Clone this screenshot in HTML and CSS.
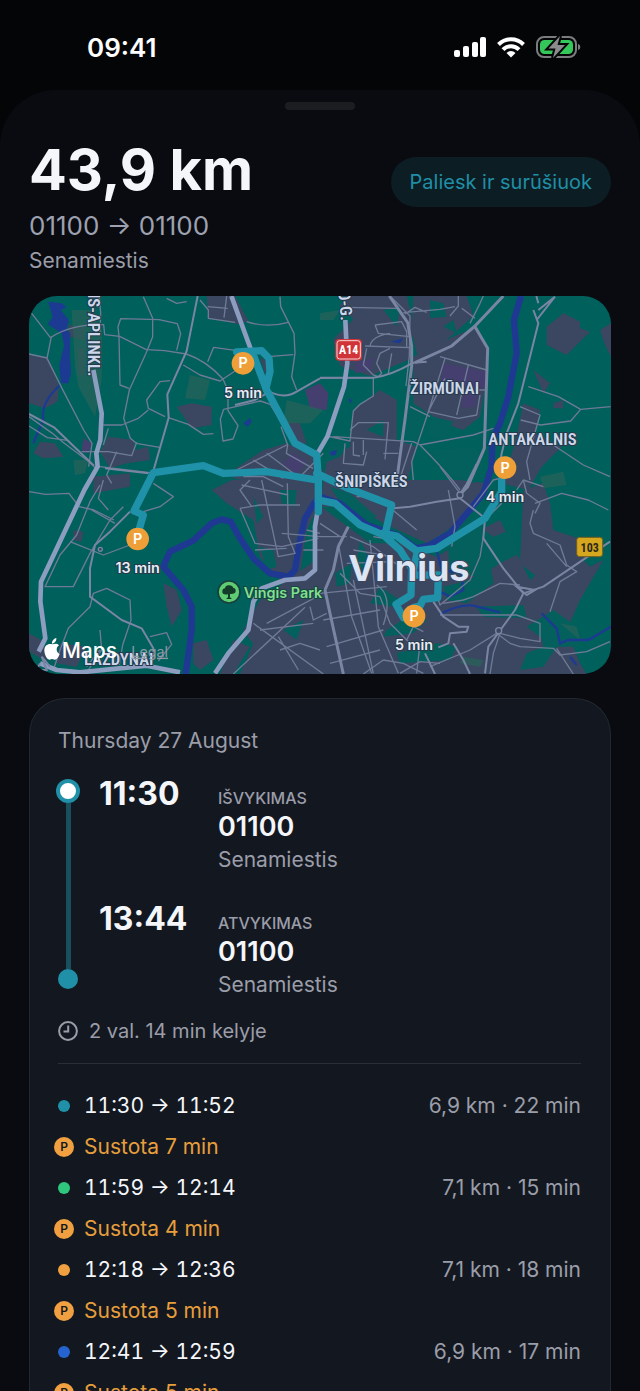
FILE: index.html
```html
<!DOCTYPE html>
<html lang="lt">
<head>
    <meta charset="UTF-8">
    <meta name="viewport" content="width=device-width, initial-scale=1.0">
    <title>Kelionė</title>
    <link rel="stylesheet" href="styles.css">
</head>
<body>
    <div class="status-bar">
        <span class="clock">09:41</span>
        <svg class="status-icons" viewBox="0 0 128 24" aria-hidden="true">
            <!-- signal -->
            <g fill="#fff">
                <rect x="0" y="15" width="6" height="7" rx="2"/>
                <rect x="9" y="11" width="6" height="11" rx="2"/>
                <rect x="18" y="7" width="6" height="15" rx="2"/>
                <rect x="26" y="2" width="6" height="20" rx="2"/>
            </g>
            <!-- wifi -->
            <g fill="none" stroke="#fff" stroke-width="4">
                <path d="M44.500 9.500a17.500 17.500 0 0 1 25 0"/>
                <path d="M49 14.700a11 11 0 0 1 16 0"/>
            </g>
            <path d="M57 22.500l-4.500-4.600a6.500 6.500 0 0 1 9 0z" fill="#fff"/>
            <!-- battery -->
            <rect x="83" y="2" width="39" height="20" rx="7" fill="none" stroke="#7b7c7e" stroke-width="2"/>
            <path d="M124 9c3 .6 3 5.400 0 6z" fill="#7b7c7e"/>
            <rect x="86" y="5" width="33" height="14" rx="4.500" fill="#34c759"/>
            <path d="M106 1L94.500 13.500h7L99 23l12-13h-7.500z" fill="#8a8b8d" stroke="#050608" stroke-width="4" paint-order="stroke"/>
        </svg>
    </div>

    <main class="sheet">
        <div class="grabber"></div>

        <header class="trip-header">
            <div>
                <h1>43,9 km</h1>
                <p class="route">01100 → 01100</p>
                <p class="district">Senamiestis</p>
            </div>
            <button class="sort-button" type="button">Paliesk ir surūšiuok</button>
        </header>

        <div class="map">
            <svg viewBox="27 18 1746 1134" role="img" aria-label="Kelionės žemėlapis">
                <!-- built-up areas -->
                <g class="built">
                    <path d="M27 195L85 205 118 290 112 335 75 355 27 340z"/>
                    <path d="M175 175h18v80h-18zM60 455l45 5 25 40-60 5-30-15zM145 105l50 5-5 40-40-10z"/>
                    <path d="M265 440l75 10 5 30 40-10 5 40-70 10-50 15-30-50zM220 560l110-10v40l-110 20z"/>
                    <path d="M470 350l45-10 60 10v55l-60 10z"/>
                    <path d="M560 18h85l40 75-30 10-90-20zM720 205l35 10-10 60z"/>
                    <path d="M640 540l90-60 70-20 80 40 40 60-50 20-110 5-120-20zM780 390l60 10 20 60-40 10z"/>
                    <path d="M980 18h180l20 80-10 110-120 50-90-30-20-80 60-60-40-40z"/>
                    <path d="M1180 18h160l20 60-100 90-60 60-25-100z"/>
                    <path d="M1370 110l30 60v90l-20 120-50 40-60-20-90-60 0-140 120-60z"/>
                    <path d="M1000 360l80-60 50 30v120l60 20-50 180h-240l20-140 70-40z"/>
                    <path d="M1580 110l50-40 50 25v20l30 10-50 50-20 20-60-30zM1740 120l33-20v100l-20-40zM1540 240l50 40-20 30zM1600 340l30-10v25h-30z"/>
                    <path d="M1510 340l50 20-15 70 80 40-60 60-40 70-80-20 40-120z"/>
                    <path d="M575 600l60-30 240-10 25 80-40 80-20 130-60 20-60-70-20-110-80-50z"/>
                    <path d="M430 880l40 20 15 60-30 50-15-60zM160 720l30 5-5 30-25-5zM720 930l180-130v352h-240l40-90-30-40z"/>
                    <path d="M520 1060l40-10 20 60-40 30-20-20zM640 1050l50 20-50 82h-40zM27 1030l45 25 10 60-55-30zM120 1060l80 10-30 60-60-10z"/>
                    <path d="M890 640l160 120 90 0 110 40 150-90 40-20 60 120 30 60 120-100 60 60 40-20-70 120-40 90 40 100 20 32H890z"/>
                    <path d="M1100 570l220 0 80 10-40 70-60 60-80 50-130-60-80-50z"/>
                    <path d="M1510 600l60-20 20 60 10 80 90 30 30 20-60 80-60 50-100-80z"/>
                </g>
                <!-- parks inside the city -->
                <g class="park">
                    <path d="M945 850l50-30-5 60-40 10zM1080 890l60 40-20 20-70-10zM1100 1020l80-50 40 20-40 40-90 10zM1130 1090l120-30 60 10-20 40-150 10zM1270 890l80-20 60-50 10 60-80 60-60-10z"/>
                    <path d="M1370 950l140-5 10 40-130-5zM1500 1140l20-50 50-20-10-50 40-10 10 60-40 60zM1280 720l70-30 70 50 50-20 30 70-60 30-60 40-90-10z"/>
                    <path d="M1090 60l50-10-10 60zM1230 30l40 10 10 40-50 5zM1270 110l30-20 10 40zM1150 350l60 10-20 100-30-20zM930 450l60 10-30 40-50 20zM1240 380l60 15-30 60-50-20zM1040 420l50-30v50z"/>
                    <path d="M780 600l50 0-5 50-40-10zM700 620l30 60-20 20zM720 770l40 10 10 50-30 10zM790 1020l60-30-20 60zM1020 750l30 60-20 40-20-40z"/>
                    <path d="M930 590l60 20 80 70-50 5-60-50zM1230 480l140-10 20 60-30 50-60-20zM1520 1010l80 60 80 0-10-60-70-50z"/>
                </g>
                <g class="estate">
                    <path d="M190 445l25 15-10 30-20-5zM855 300l45-20 25 30-5 50-50-5zM1270 220l130 25-5 50-130-20zM1330 310l45-10-10 50-40 5zM1010 215l50-10-10 35-45 10zM790 520l30-30 40 25-30 40z"/>
                </g>
                <g class="woods">
                    <path d="M155 60h60l30 60 0 150-20 110-50-90-10-60zM510 255l60 15-15 60-60-5zM160 510h45l-10 40-30 5zM800 330l110 30-40 40-80 0zM1560 560l70-15 10 40-70 10zM900 70l60-10-20 30h-40zM1330 1100l60 10-10 20-60-10zM1620 1000l50 10 10 40z"/>
                </g>

                <!-- water -->
                <g class="water">
                    <path d="M85 35l40 5 15 12-18 8 25 30-8 30 12 10-2 60 4 60-8 30h-22l-5-55 15-60-8-35-30-20-12-8 15-20-10-35zM670 400l20-15 5 10-12 15zM1110 155l40-10-10 15zM930 485l20-5-2 15-15 2zM985 325l12 5-6 10z"/>
                    <path class="stream" d="M120 285Q60 340 70 390L40 460"/>
                    <path class="stream" d="M1250 780l15 60 60 10 5 50-40 20-40-20"/>
                    <path class="stream" d="M1260 972q60-30 100-25l80 20"/>
                    <path class="stream" d="M1565 970l45 45 10 45 25-10 60 0 68-40M1650 1100l20 25"/>
                </g>
                <path class="river" d="M1503 18L1482 90 1490 190 1465 320 1440 400 1417 450 1415 530 1390 610 1345 665 1290 730 1230 765 1190 775 1130 735 1040 705 960 640 900 620 882 640 855 685 838 760 825 840 805 860 750 850 700 805 660 745 632 695 605 688 575 700 520 752 450 785 430 830 490 900 515 950 515 1020 497 1152"/>

                <!-- side streets -->
                <g class="street">
                    <path d="M35 70l58 75-12 60 50 100 60 115 25 40-10 70M27 192l55 12M93 142q60-40 158-38l3 30 45 5 80 40 55 3 65 10q60 20 110 75l15 35v60l30 45-15 40-30 6-8-65 10-30 110-25 30 10 30 50"/>
                    <path d="M27 380l70 50 30 25 80 60 20 20M27 408l55 35 60 8M240 130l2-60-4-50M370 20l28 65v55l-20 50-50 110-17 85 20 60 18 15 70 12"/>
                    <path d="M297 140l-3-30 8-24 115 3 55 12 10 30-12 50M297 140l3 145 27 10M563 215l18-43 70 10M450 272l-30 3-40 55 5 25 50 25M385 360l-30 25-50 20h-55M445 383l60 20 45 30 30-2M490 225l50 30 60 18 45-30"/>
                    <path d="M440 25l30 15 30-5M540 30l25 30 0 25 80 12M563 50l60 5M620 18l-8 65M680 95q60 20 125 2M780 20l2 30 40 80 3 60-10 70 15 40M745 200l75-6"/>
                    <path d="M240 530l150 18M185 485h80l70 12 15-40M265 415l-15 50M290 485l-30 70 15 25M400 580l60 40-40 30-50 15M250 570l-15 55 30 35"/>
                    <path d="M783 410l20 55-4 25 80 45M650 540l150-75M700 510l90 55M740 490l80 60M840 560l70-70M670 560l60 0 60 30M690 570l-30 30 35 50"/>
                    <path d="M830 460l70 30M980 52l150 3M1110 18l60 60-2 120-10 90M1155 72l30-20 35 15M1150 68l110-10 45-8M1315 18v30l-25 30M1350 100l30-60 10-22M1365 85l-40-30"/>
                    <path d="M1065 105l80-10 15 30v45M1065 105l10 25 95 10M1035 168l135 5M1050 168q5-30 60-38M1040 175l-10 50 30 30 15 5 10-10-15-30 10-30 30-15M1105 250l10-60"/>
                    <path d="M900 265l160-2v55l-40 25-20 20-10 90-70-15M990 420l25-22h90l-10 110M940 440l240 15 20 10 160-30 60-20M975 460l-5 60 60 5 10-40M1000 455v40l20 3M1030 450v45M1090 490h45M1170 350l60 30"/>
                    <path d="M1260 200l140 40M1275 205l-50 160 90 20 55-10 10-60M1345 225l-35 150M1275 265l-50 100-50 150 5 55M1175 460l-20 60-20 60M1200 465q80 80 120 135M1375 300h25"/>
                    <path d="M1525 290l90 30 67 38-30 35-90 12-60-15M1682 358l90-8M1500 350l60 25-40 140 10 55M1600 465l90 60 80 35M1490 600l20-30 60 20"/>
                    <path d="M1360 650l60-80 40-10M1445 640l-60 60-50 30M1320 610l-60-80M1285 600l20 110-10 60M1190 720l-60-50-60-50-60 0"/>
                    <path d="M27 605l50 8 70-3 30 40 45 10 60 30M240 585l-30 50-40 100-50 60-45 95h85l50-100 60-100 40-40M215 660l70 40M150 755l100 40 80-30"/>
                    <path d="M100 1140l20-60 25-65 65-65 10-40 40-15 70 35 3 60-25 75-10 60M240 1020l5 60-40 60M390 1040l50-12 15 35-40 50M200 1130l40-50"/>
                    <path d="M660 655l45 105 80 10 110-25M705 780l95-5M785 730l115 10M660 655l60-10 120 0M725 570l50 230 50-10-20-50-3-160M805 615l-140-30"/>
                    <path d="M700 1000l210 152M740 1000l160-85M640 1152l215-200M720 1020l160-20M775 1040l60 100M900 1080l-60-20-60 20M870 950l10 40 40-20M860 720l40 10M850 780h60"/>
                    <path d="M900 910l200-20M910 990l170-30M920 1070l170-50M930 1120l150-40M955 760l40 220 60 170M1050 750l25 260 60 140M1000 870l60 280M900 740h80M900 700l60 40"/>
                    <path d="M1060 740l60 10 30 60M990 740l70 30 80 60M1000 780l120 20M980 820l140-5M960 850l60 60 60 10 30 80 60 60"/>
                    <path d="M1160 1050l20-40 20-10-10-25M1180 1010l30 15M1230 1130l120-50 80-50M1140 1150l60-35 60 5M1090 1110l60 10 60 30M1090 1110l-60 42"/>
                    <path d="M1390 740l-10 60-30 70-90 75-10-30M1270 940l60-10 30-10 80-40 60 5M1260 975h230l70 25v55l-60-10-60-15-20 60-10 62"/>
                    <path d="M1430 1030l40 30 30 10 100 5 20 20 80-10 70-30M1610 1075l50 77M1540 660l-10 40 10 30 80 35 20 60 30 20-50 30-30 90M1580 760l60 70M1510 570l10 40 40 30-15 30M1545 640l80-30 80 20 60 30"/>
                    <path d="M1090 1005q30-90-20-120M1200 1060l-10 90"/>
                </g>

                <!-- main roads -->
                <g class="road">
                    <path d="M533 18l-33 165-58 130 4 70-48 167M330 665l-60 60-45 40-15 70 0 85 95 70 60 25 35 60 0 30"/>
                    <path d="M740 300q50 30 90 5l70-40M645 345l60-15 35-20M255 535l130 15M27 372l75 40 120 115"/>
                    <path d="M1220 215l-40 3q-70 40-120 45H900M1540 60l15 40-60 240-35 90-15 60-10 60M1550 90l55-70M1555 60l50-40M1555 40l-6-22"/>
                    <path d="M1395 685l-5 60 60 90 60 75-25 50-80 110-10 80M1510 910l60-20 200-135"/>
                    <path d="M1120 655l50-5 80-15 70-10 75 60M1320 612l20-30 30-60M1240 935l30 45 45 30 30 0-5 15-50 5-5 30-30 12M1300 1060l30 50 20 42M1215 1090l30 62"/>
                </g>
                <g class="road wide">
                    <path d="M1108 18l55 80 12 70v60l-20 160-27 200M1450 18l-85 90-70 60-110 50M1365 110l38 65-10 300-50 115-30 30"/>
                    <path d="M985 710l-30 60-15 70-25 60 15 70 40 182"/>
                </g>
                <g class="motorway">
                    <path d="M220 240l25 130-4 80-12 40 4 40-40 70-85 180-45 95-2 60 15 110-20 40M60 1120l50 20 70 7 200-20 100 20"/>
                    <path d="M634 18l106 290M976 90l6 130-10 70-50 150-35 60M895 650l-10 60v130l-30 25-60 5-70 25-25 40-15 85-60 70-40 60"/>
                </g>
                <circle class="roundabout" cx="1320" cy="615" r="9"/>
                <circle class="roundabout" cx="241" cy="778" r="6"/>
                <circle class="roundabout" cx="1436" cy="1022" r="9"/>
                <path class="junction" d="M60 1120l-10 20h30l-15-40 25 30M1490 890l30 25 25-15z"/>

                <!-- driven route -->
                <g class="track">
                    <path d="M357 720l13-45-28-12 58-115 150-21 60 23 130-5 150 25"/>
                    <path d="M650 186l75-4 22 23 3 40-12 50M700 195l40 105 85 160 65 35 5 75v95"/>
                    <path d="M890 550l95 45 130 50-20 90M895 630l50 10 75 65 70 30 50 45 35 55-2 80-45 28 22 40"/>
                    <path d="M1445 570v35l-50 80-145 90-60 8-60-45-40-8M1192 785l-15 70h78l-2 68-43 5-10 20-20 5-5 20"/>
                </g>

                <!-- place names -->
                <g class="place">
                    <text transform="translate(203 -19) rotate(90)">NIS-APLINKL.</text>
                    <text transform="translate(955 3) rotate(85)">O-G.</text>
                    <text x="1170" y="311">ŽIRMŪNAI</text>
                    <text x="1405" y="465">ANTAKALNIS</text>
                    <text x="945" y="590">ŠNIPIŠKĖS</text>
                    <text x="192" y="1126">LAZDYNAI</text>
                </g>
                <text class="city" x="985" y="874">Vilnius</text>

                <rect class="badge-a" x="946" y="147" width="80" height="65" rx="12"/>
                <rect class="badge-a-line" x="951" y="152" width="70" height="55" rx="8"/>
                <text class="badge-a-text" x="986" y="193">A14</text>
                <rect class="badge-b" x="1670" y="742" width="78" height="58" rx="9"/>
                <text class="badge-b-text" x="1709" y="785">103</text>

                <circle class="tree-pin" cx="627" cy="906" r="33"/>
                <path class="tree" d="M624 922v-9q-18 3-17-9 0-8 8-9 1-9 11-9 11-1 14 8 8 1 7 10-1 9-17 8v10l6 5h-18z"/>
                <text class="park-name" x="671" y="924">Vingis Park</text>

                <!-- parking stops -->
                <g class="parking">
                    <circle cx="669" cy="220" r="34"/>
                    <circle cx="1455" cy="533" r="34"/>
                    <circle cx="353" cy="747" r="34"/>
                    <circle cx="1182" cy="978" r="34"/>
                    <text class="p" x="669" y="235">P</text>
                    <text class="p" x="1455" y="548">P</text>
                    <text class="p" x="353" y="762">P</text>
                    <text class="p" x="1182" y="993">P</text>
                    <text class="wait" x="669" y="323">5 min</text>
                    <text class="wait" x="1455" y="636">4 min</text>
                    <text class="wait" x="353" y="849">13 min</text>
                    <text class="wait" x="1182" y="1080">5 min</text>
                </g>

                <!-- attribution -->
                <path fill="#fff" d="M97 1063c5-1 9-3 15-1q2 1 5 4c-10 7-9 21 2 26-4 10-9 18-15 17-6-2-9-3-15 0-9 1-16-17-16-28 0-16 13-22 24-18zM96 1061c-1-8 5-15 13-17 1 9-5 16-13 17z"/>
                <text class="maps" x="125" y="1104">Maps</text>
                <a href="#legal"><text class="legal" x="334" y="1100">Legal</text></a>
            </svg>
        </div>

        <section class="card">
            <h2>Thursday 27 August</h2>

            <div class="timeline">
                <div class="rail">
                    <span class="rail-start"></span>
                    <span class="rail-line"></span>
                    <span class="rail-end"></span>
                </div>
                <div class="stops">
                    <div class="stop">
                        <time>11:30</time>
                        <div class="place-info">
                            <p class="label">IŠVYKIMAS</p>
                            <p class="code">01100</p>
                            <p class="area">Senamiestis</p>
                        </div>
                    </div>
                    <div class="stop">
                        <time>13:44</time>
                        <div class="place-info">
                            <p class="label">ATVYKIMAS</p>
                            <p class="code">01100</p>
                            <p class="area">Senamiestis</p>
                        </div>
                    </div>
                </div>
            </div>

            <p class="duration">
                <svg viewBox="0 0 20 20" aria-hidden="true">
                    <circle cx="10" cy="10" r="8.900"/>
                    <path d="M10.200 4.500v5.900H5.500"/>
                </svg>
                2 val. 14 min kelyje
            </p>

            <ol class="legs">
                <li class="leg">
                    <span class="dot teal"></span>
                    <span class="hours">11:30 → 11:52</span>
                    <span class="stats">6,9 km · 22 min</span>
                </li>
                <li class="pause"><span class="p-icon">P</span>Sustota 7 min</li>
                <li class="leg">
                    <span class="dot green"></span>
                    <span class="hours">11:59 → 12:14</span>
                    <span class="stats">7,1 km · 15 min</span>
                </li>
                <li class="pause"><span class="p-icon">P</span>Sustota 4 min</li>
                <li class="leg">
                    <span class="dot orange"></span>
                    <span class="hours">12:18 → 12:36</span>
                    <span class="stats">7,1 km · 18 min</span>
                </li>
                <li class="pause"><span class="p-icon">P</span>Sustota 5 min</li>
                <li class="leg">
                    <span class="dot blue"></span>
                    <span class="hours">12:41 → 12:59</span>
                    <span class="stats">6,9 km · 17 min</span>
                </li>
                <li class="pause"><span class="p-icon">P</span>Sustota 5 min</li>
            </ol>
        </section>
    </main>
</body>
</html>
```
FILE: styles.css
```css
* {
    margin: 0;
    padding: 0;
    box-sizing: border-box;
}

body {
    font-family: Inter, "Liberation Sans", sans-serif;
    background-color: #040507;
    color: #f5f6fa;
    display: flex;
    flex-direction: column;
    height: 100vh;
    overflow: hidden;
}

.status-bar {
    display: flex;
    flex: none;
    align-items: center;
    justify-content: space-between;
    height: 90px;
    padding: 4px 58px 0 87px;
}

.clock {
    font-size: 26px;
    font-weight: 600;
    color: #ffffff;
}

.status-icons {
    width: 128px;
    height: 24px;
}

.sheet {
    flex: 1;
    min-height: 0;
    overflow-y: auto;
    scrollbar-width: none;
    background-color: #090b10;
    border-radius: 56px 56px 0 0;
    padding: 12px 29px 0;
}

.grabber {
    width: 70px;
    height: 8px;
    margin: 0 auto;
    border-radius: 4px;
    background-color: #1c1d21;
}

.trip-header {
    display: flex;
    justify-content: space-between;
    align-items: flex-start;
    padding-top: 28px;
}

.trip-header h1 {
    font-size: 56px;
    line-height: 64px;
    font-weight: 700;
}

.route {
    font-size: 26px;
    line-height: 47px;
    color: #9da1b0;
}

.district {
    font-size: 21px;
    line-height: 24px;
    color: #9b9da9;
}

.sort-button {
    height: 50px;
    margin-top: 19px;
    padding: 0 19px;
    border: none;
    border-radius: 25px;
    background-color: #0c1d24;
    color: #208ea6;
    font-family: inherit;
    font-size: 20px;
    cursor: pointer;
}

/* map */
.map {
    margin-top: 23px;
    border-radius: 28px;
    overflow: hidden;
    background-color: #00605c;
}

.map svg {
    display: block;
    width: 100%;
}

.built { fill: #3b4761; }
.park { fill: #03605c; }
.estate { fill: #453f70; }
.woods { fill: #28645a; opacity: 0.7; }
.water { fill: #1c3a92; }

.stream {
    fill: none;
    stroke: #1c3a92;
    stroke-width: 7;
}

.river {
    fill: none;
    stroke: #1f3992;
    stroke-width: 19;
    stroke-linejoin: round;
}

.street,
.road,
.motorway,
.track {
    fill: none;
    stroke-linejoin: round;
}

.street {
    stroke: #6f7b96;
    stroke-width: 4;
}

.road {
    stroke: #7985a2;
    stroke-width: 6;
}

.road.wide {
    stroke-width: 9;
}

.motorway {
    stroke: #8c9dc0;
    stroke-width: 14;
}

.roundabout {
    fill: #3b4761;
    stroke: #7985a2;
    stroke-width: 4;
}

.junction {
    fill: none;
    stroke: #7985a2;
    stroke-width: 6;
}

.track {
    stroke: #1f91a9;
    stroke-width: 22;
    stroke-linecap: round;
}

.place {
    font-family: "Roboto Condensed", Roboto, sans-serif;
    font-size: 50px;
    font-weight: 600;
    fill: #ccd7ea;
    stroke: #27394c;
    stroke-width: 6;
    paint-order: stroke;
}

.city {
    font-size: 108px;
    font-weight: 700;
    fill: #dce5f3;
    stroke: #3b4761;
    stroke-width: 6;
    paint-order: stroke;
}

.badge-a { fill: #d13438; }

.badge-a-line {
    fill: none;
    stroke: #f4d5d8;
    stroke-width: 3;
}

.badge-a-text,
.badge-b-text {
    font-family: "Roboto Condensed", Roboto, sans-serif;
    font-size: 36px;
    font-weight: 700;
    text-anchor: middle;
    fill: #ffffff;
}

.badge-b {
    fill: #d5a71e;
    stroke: #6f5c22;
    stroke-width: 3;
}

.badge-b-text { fill: #2b2817; }

.tree-pin {
    fill: #5fcb72;
    stroke: #173f3b;
    stroke-width: 5;
}

.tree { fill: #123c29; }

.park-name {
    font-size: 43px;
    font-weight: 600;
    fill: #83df8f;
    stroke: #164641;
    stroke-width: 6;
    paint-order: stroke;
}

.parking {
    text-anchor: middle;
    fill: #ef9f38;
}

.parking .p {
    font-size: 43px;
    font-weight: 600;
    fill: #ffffff;
}

.parking .wait {
    font-size: 43px;
    font-weight: 600;
    fill: #e9edf5;
    stroke: #263b4b;
    stroke-width: 6;
    paint-order: stroke;
}

.maps {
    font-size: 63px;
    font-weight: 500;
    fill: #ffffff;
}

.legal {
    font-size: 43px;
    fill: #8d9aa8;
    text-decoration: underline;
}

/* trip card */
.card {
    margin-top: 24px;
    padding: 27px 29px 0 28px;
    border: 1px solid #222831;
    border-bottom: none;
    border-radius: 36px 36px 0 0;
    background-color: #131820;
}

.card h2 {
    font-size: 21px;
    line-height: 30px;
    font-weight: 400;
    color: #9b9da9;
}

.timeline {
    display: flex;
    gap: 19px;
    margin-top: 18px;
}

.rail {
    display: flex;
    flex-direction: column;
    align-items: center;
    width: 24px;
    margin-left: -2px;
    padding: 5px 0 12px;
}

.rail-start {
    width: 24px;
    height: 24px;
    border: 4px solid #1f90a8;
    border-radius: 50%;
    background-color: #ffffff;
}

.rail-line {
    flex: 1;
    width: 5px;
    background-color: #19505d;
}

.rail-end {
    width: 20px;
    height: 20px;
    border-radius: 50%;
    background-color: #1f90a8;
}

.stops {
    flex: 1;
    display: flex;
    flex-direction: column;
    gap: 23px;
}

.stop {
    display: grid;
    grid-template-columns: 119px 1fr;
}

.stop time {
    font-size: 32px;
    line-height: 40px;
    font-weight: 700;
}

.place-info {
    padding-top: 12px;
}

.label {
    font-size: 16px;
    line-height: 24px;
    font-weight: 500;
    color: #9b9da9;
}

.code {
    font-size: 27px;
    line-height: 34px;
    font-weight: 600;
}

.area {
    font-size: 21px;
    line-height: 32px;
    color: #9b9da9;
}

.duration {
    display: flex;
    align-items: center;
    gap: 11px;
    margin-top: 15px;
    padding-bottom: 17px;
    border-bottom: 1px solid #292e37;
    font-size: 20px;
    line-height: 30px;
    color: #9b9da9;
}

.duration svg {
    width: 20px;
    height: 20px;
    fill: none;
    stroke: #9b9da9;
    stroke-width: 2;
}

.legs {
    list-style: none;
    margin: 21px 0 0 -4px;
}

.leg,
.pause {
    display: grid;
    grid-template-columns: 20px 1fr auto;
    column-gap: 10px;
    align-items: center;
    font-size: 21px;
    line-height: 41px;
}

.pause {
    color: #e79e3c;
}

.hours {
    font-variant-numeric: tabular-nums;
}

.stats {
    color: #9b9da9;
}

.dot {
    width: 12px;
    height: 12px;
    border-radius: 50%;
    justify-self: center;
}

.teal { background-color: #1f90a8; }
.green { background-color: #2ec77c; }
.orange { background-color: #f0a040; }
.blue { background-color: #2563cf; }

.p-icon {
    width: 20px;
    height: 20px;
    border-radius: 50%;
    background-color: #f0a040;
    color: #131820;
    font-size: 12px;
    line-height: 20px;
    font-weight: 600;
    text-align: center;
}
```
